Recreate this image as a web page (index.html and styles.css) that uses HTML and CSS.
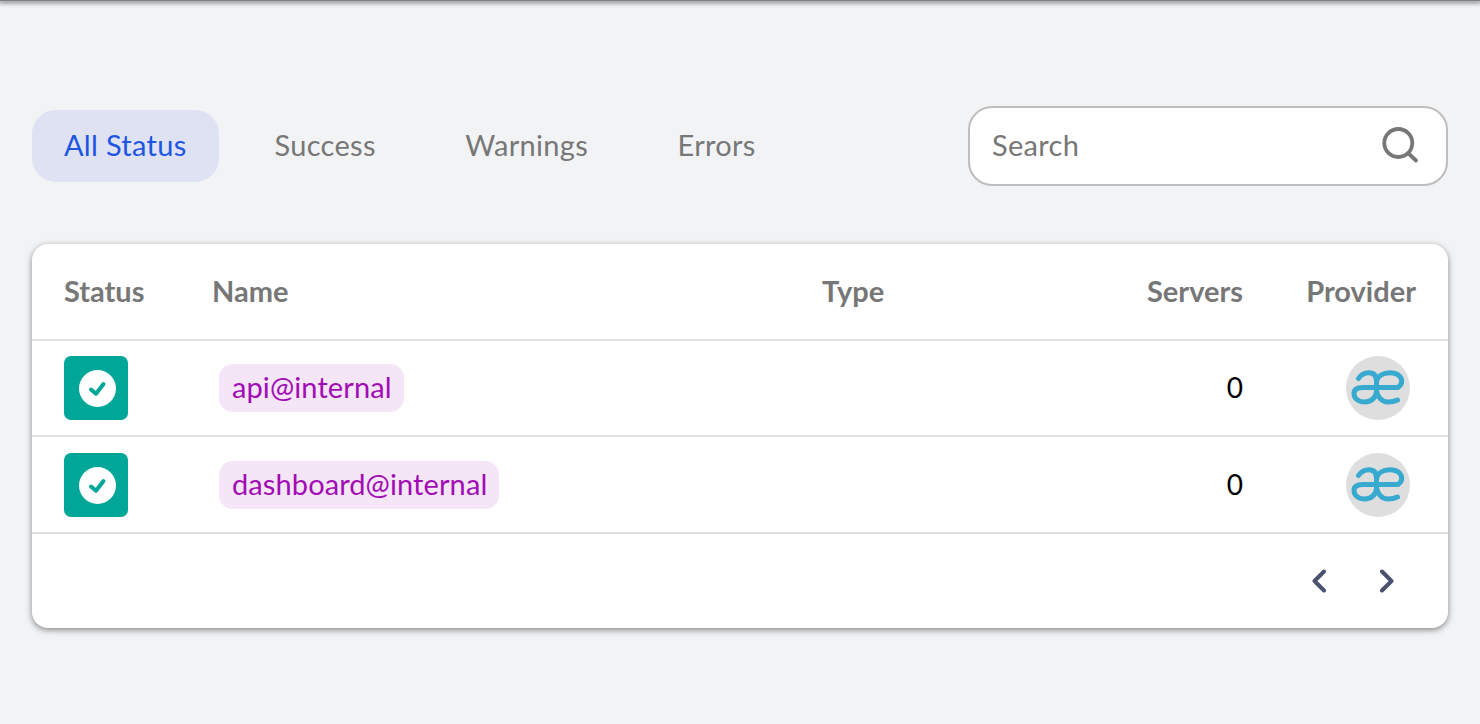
FILE: index.html
```html
<!DOCTYPE html>
<html lang="en">
<head>
<meta charset="utf-8">
<title>Services</title>
<link rel="stylesheet" href="styles.css">
</head>
<body>
<header class="topbar"></header>
<main class="page">
  <div class="toolbar">
    <nav class="tabs">
      <a class="tab tab-active"><span class="label">All Status</span></a>
      <a class="tab"><span class="label">Success</span></a>
      <a class="tab"><span class="label">Warnings</span></a>
      <a class="tab"><span class="label">Errors</span></a>
    </nav>
    <div class="search">
      <span class="search-label label">Search</span>
      <svg class="search-icon" viewBox="0 0 38 38" width="38" height="38" fill="none" stroke="#777" stroke-width="3.8" stroke-linecap="round"><circle cx="16.300" cy="16" r="14"/><path d="M26.500 26.500l7.500 7"/></svg>
    </div>
  </div>
  <section class="card">
    <div class="row row-head">
      <div>Status</div>
      <div>Name</div>
      <div>Type</div>
      <div class="right">Servers</div>
      <div class="right">Provider</div>
    </div>
    <div class="row">
      <div class="status"><svg viewBox="0 0 37 37" width="37" height="37"><circle cx="18.500" cy="18.500" r="18.500" fill="#fff"/><path d="M12 19.500l5 4.300 7.500-9.800" fill="none" stroke="#00a697" stroke-width="4" stroke-linecap="round" stroke-linejoin="round"/></svg></div>
      <div><span class="chip">api@internal</span></div>
      <div></div>
      <div class="right count">0</div>
      <div class="right"><span class="avatar"><svg viewBox="0 0 64 64" width="64" height="64" fill="none" stroke="#38a9cf" stroke-width="5" stroke-linecap="round"><path d="M12.500 22.500C15 18.500 19 16.700 23 16.700C28 16.700 30.500 20 30.500 25.500L30.500 35C30.500 41.500 25 46 19 46C12.500 46 8 42.500 8 37.500C8 33.500 11.500 31.500 17 31.500L52 31.500C54.500 29.500 55.700 27.500 55.700 25.500C55.700 20 50.500 16.700 44 16.700C37 16.700 31.500 20 30.500 25.500"/><path d="M30.500 35C31.500 41 36 46 42 46C45.500 46 48.500 45.500 51.500 44"/></svg></span></div>
    </div>
    <div class="row row-last">
      <div class="status"><svg viewBox="0 0 37 37" width="37" height="37"><circle cx="18.500" cy="18.500" r="18.500" fill="#fff"/><path d="M12 19.500l5 4.300 7.500-9.800" fill="none" stroke="#00a697" stroke-width="4" stroke-linecap="round" stroke-linejoin="round"/></svg></div>
      <div><span class="chip">dashboard@internal</span></div>
      <div></div>
      <div class="right count">0</div>
      <div class="right"><span class="avatar"><svg viewBox="0 0 64 64" width="64" height="64" fill="none" stroke="#38a9cf" stroke-width="5" stroke-linecap="round"><path d="M12.500 22.500C15 18.500 19 16.700 23 16.700C28 16.700 30.500 20 30.500 25.500L30.500 35C30.500 41.500 25 46 19 46C12.500 46 8 42.500 8 37.500C8 33.500 11.500 31.500 17 31.500L52 31.500C54.500 29.500 55.700 27.500 55.700 25.500C55.700 20 50.500 16.700 44 16.700C37 16.700 31.500 20 30.500 25.500"/><path d="M30.500 35C31.500 41 36 46 42 46C45.500 46 48.500 45.500 51.500 44"/></svg></span></div>
    </div>
    <div class="pager">
      <svg viewBox="0 0 16 24" width="16" height="24" fill="none" stroke="#4a5270" stroke-width="4" stroke-linecap="round" stroke-linejoin="round"><path d="M13 2.500L3.500 12L13 21.500"/></svg>
      <svg viewBox="0 0 16 24" width="16" height="24" fill="none" stroke="#4a5270" stroke-width="4" stroke-linecap="round" stroke-linejoin="round"><path d="M3 2.500L12.500 12L3 21.500"/></svg>
    </div>
  </section>
</main>
</body>
</html>
```
FILE: styles.css
```css
* { box-sizing: border-box; }
html, body { margin: 0; height: 100%; }
body {
  background: #f2f3f5;
  font-family: "Lato", "Noto Sans", sans-serif;
  font-size: 29px;
  color: #777;
  overflow: hidden;
}
.topbar {
  height: 1px;
  background: #808080;
  box-shadow: 0 1px 4px 1px rgba(0,0,0,.55);
}
.page { padding: 105px 32px 0; }
.toolbar {
  display: flex;
  justify-content: space-between;
  align-items: center;
  height: 80px;
  margin-bottom: 58px;
}
.tabs { display: flex; gap: 89.5px; align-items: center; }
.tab {
  height: 72px;
  display: flex;
  align-items: center;
}
.label { letter-spacing: .3px; padding-bottom: 4px; }
.tab-active {
  background: #dee2f2;
  color: #1e55e0;
  border-radius: 24px;
  padding: 0 32px;
  margin-right: -33.5px;
}
.search {
  width: 480px;
  height: 80px;
  background: #fff;
  border: 2px solid #bdbdbd;
  border-radius: 24px;
  display: flex;
  align-items: center;
  justify-content: space-between;
  padding: 0 26px 0 22px;
}
.card {
  background: #fff;
  border-radius: 16px;
  box-shadow: 0 2px 6px rgba(0,0,0,.45);
  height: 384px;
  display: grid;
  grid-template-rows: 97px 96px 97px 94px;
}
.row {
  display: grid;
  grid-template-columns: 148px 610px 160px 261px 173px;
  align-items: center;
  padding: 0 32px;
  border-bottom: 2px solid #e0e0e0;
}
.row-head { font-weight: 700; padding-bottom: 3px; }
.row-last { padding-top: 1px; }
.right { text-align: right; }
.status {
  width: 64px;
  height: 64px;
  background: #00a697;
  border-radius: 7px;
  display: flex;
  align-items: center;
  justify-content: center;
  padding-left: 2px;
}
.chip {
  display: inline-block;
  margin-left: 7px;
  height: 48px;
  line-height: 45px;
  padding: 0 12px 0 13px;
  border-radius: 14px;
  background: #f4e5f7;
  color: #a20cb4;
  letter-spacing: .1px;
}
.count { color: #000; font-size: 28px; padding-bottom: 3px; }
.avatar {
  display: inline-flex;
  width: 64px;
  height: 64px;
  border-radius: 50%;
  background: #dedede;
  margin-right: 6px;
  vertical-align: middle;
}
.pager {
  display: flex;
  justify-content: flex-end;
  align-items: center;
  gap: 52px;
  padding: 0 53px 0 0;
}
```
